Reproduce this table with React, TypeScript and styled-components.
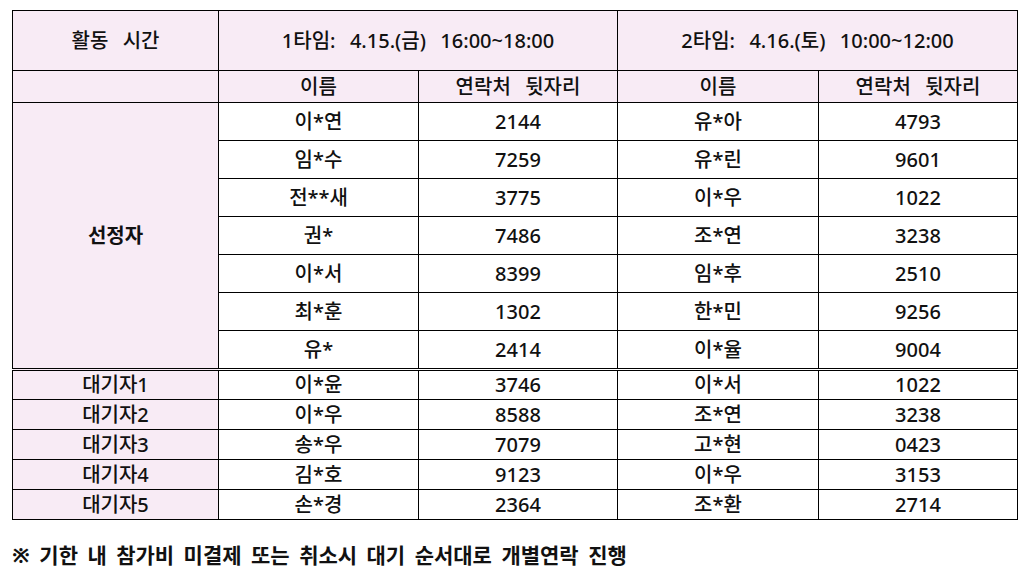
import styled, { createGlobalStyle } from "styled-components"

const GlobalStyle = createGlobalStyle`
  body {
    margin: 0;
    background: #ffffff;
    font-family: "Noto Sans", "Noto Sans CJK KR", sans-serif;
    color: #111111;
  }
`

const Page = styled.div`
  padding: 10px 14px 0 12px;
`

const Table = styled.table`
  width: 1005px;
  border-collapse: collapse;
  table-layout: fixed;
  font-size: 20px;
`

const Cell = styled.td<{ $tint?: boolean; $bold?: boolean; $h?: number; $double?: boolean }>`
  border: 1px solid #000;
  ${props => props.$double && "border-top: 3px double #000;"}
  background: ${props => props.$tint ? "#f8ebf5" : "#ffffff"};
  font-weight: ${props => props.$bold ? 700 : 500};
  height: ${props => props.$h ? `${props.$h}px` : "auto"};
  text-align: center;
  vertical-align: middle;
  padding: 0;
  line-height: 1;
  white-space: pre;
  word-spacing: 2px;
`

const Note = styled.p`
  margin: 21px 0 0 0;
  font-size: 21px;
  font-weight: 700;
  line-height: 28px;
  word-spacing: 4px;
`

const selected = [
  ["이*연", "2144", "유*아", "4793"],
  ["임*수", "7259", "유*린", "9601"],
  ["전**새", "3775", "이*우", "1022"],
  ["권*", "7486", "조*연", "3238"],
  ["이*서", "8399", "임*후", "2510"],
  ["최*훈", "1302", "한*민", "9256"],
  ["유*", "2414", "이*율", "9004"],
]

const waiting = [
  ["대기자1", "이*윤", "3746", "이*서", "1022"],
  ["대기자2", "이*우", "8588", "조*연", "3238"],
  ["대기자3", "송*우", "7079", "고*현", "0423"],
  ["대기자4", "김*호", "9123", "이*우", "3153"],
  ["대기자5", "손*경", "2364", "조*환", "2714"],
]

export default function App() {
  return (
    <>
      <GlobalStyle />
      <Page>
        <Table>
          <colgroup>
            <col style={{ width: 206 }} />
            <col style={{ width: 200 }} />
            <col style={{ width: 199 }} />
            <col style={{ width: 201 }} />
            <col style={{ width: 199 }} />
          </colgroup>
          <tbody>
            <tr>
              <Cell $tint $h={59}>활동  시간</Cell>
              <Cell $tint colSpan={2}>1타임:  4.15.(금)  16:00~18:00</Cell>
              <Cell $tint colSpan={2}>2타임:  4.16.(토)  10:00~12:00</Cell>
            </tr>
            <tr>
              <Cell $tint $h={31}></Cell>
              <Cell $tint>이름</Cell>
              <Cell $tint>연락처  뒷자리</Cell>
              <Cell $tint>이름</Cell>
              <Cell $tint>연락처  뒷자리</Cell>
            </tr>
            {selected.map((row, i) => (
              <tr key={i}>
                {i === 0 && <Cell $tint $bold rowSpan={7}>선정자</Cell>}
                {row.map((v, j) => (
                  <Cell key={j} $h={37}>{v}</Cell>
                ))}
              </tr>
            ))}
            {waiting.map((row, i) => (
              <tr key={i}>
                {row.map((v, j) => (
                  <Cell key={j} $tint={j === 0} $h={i === 0 ? 28 : 29} $double={i === 0}>{v}</Cell>
                ))}
              </tr>
            ))}
          </tbody>
        </Table>
        <Note>※ 기한 내 참가비 미결제 또는 취소시 대기 순서대로 개별연락 진행</Note>
      </Page>
    </>
  )
}
